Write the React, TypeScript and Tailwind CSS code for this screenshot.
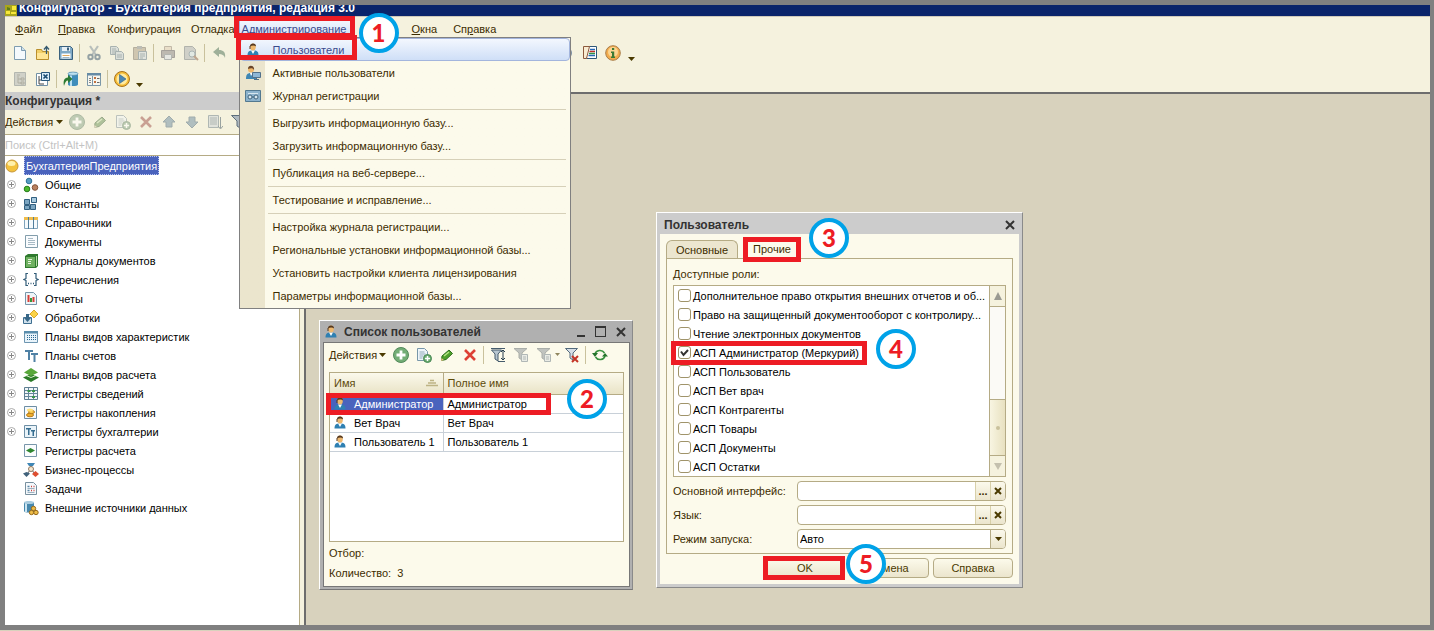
import React, { useState } from "react";

type IconProps = { name: string; dim?: boolean };

// 16x16 toolbar and tree glyphs
const glyphs: Record<string, React.ReactNode> = {
  doc: (
    <>
      <path d="M2.5 1.5h7l4 4v9h-11z" fill="#f4f9fc" stroke="#7d9cb0" />
      <path d="M9.5 1.5v4h4" fill="#cfe0ea" stroke="#7d9cb0" />
    </>
  ),
  open: (
    <>
      <path d="M1.5 4.5h5l1 2h6v8h-12z" fill="#f2cf68" stroke="#b98e2c" />
      <path d="M2 8h11v6H2z" fill="#ffe594" />
      <path d="M11.500 9V2M9 4.500l2.500-3 2.500 3" fill="none" stroke="#35596f" strokeWidth="1.300" />
    </>
  ),
  save: (
    <>
      <path d="M1.5 1.500h11l2 2v11h-13z" fill="#7fa9c6" stroke="#3a617e" />
      <path d="M4 2h8v4H4z" fill="#e6eff5" />
      <path d="M9 2.500h2v3H9z" fill="#3a617e" />
      <path d="M3.500 8.500h9v5h-9z" fill="#fff" />
      <path d="M4.500 10.500h7" stroke="#e0a95c" />
      <path d="M4.500 12.500h7" stroke="#9fb6c5" />
    </>
  ),
  cut: (
    <>
      <path d="M4 1l6 9M12 1l-6 9" stroke="#6f90a8" strokeWidth="2.200" />
      <circle cx="4.500" cy="12" r="2.200" fill="none" stroke="#1d5788" strokeWidth="2" />
      <circle cx="11.500" cy="12" r="2.200" fill="none" stroke="#1d5788" strokeWidth="2" />
    </>
  ),
  copy: (
    <>
      <path d="M1.500 1.500h6l2 2v6h-8z" fill="#b9cfdf" stroke="#4c7897" />
      <path d="M3 4h4M3 6h5M3 8h3" stroke="#4c7897" />
      <path d="M6.500 6.500h6l2 2v6h-8z" fill="#b9cfdf" stroke="#4c7897" />
      <path d="M8 10h5M8 12h5" stroke="#4c7897" />
    </>
  ),
  paste: (
    <>
      <path d="M1.500 2.500h12v12h-12z" fill="#b89a6a" stroke="#7d6d50" />
      <path d="M5 1h5v3H5z" fill="#7f8b92" />
      <path d="M6.500 6.500h8v8h-8z" fill="#c5d8e5" stroke="#4c7897" />
      <path d="M8 9h5M8 11h5M8 13h3" stroke="#4c7897" />
    </>
  ),
  print: (
    <>
      <path d="M4.500 1.500h7v5h-7z" fill="#f0c99a" stroke="#9c7f62" />
      <path d="M1.500 5.500h13v7h-13z" fill="#8c7f86" stroke="#5c5360" />
      <path d="M4.500 9.500h7v5h-7z" fill="#d3dfea" stroke="#6c7c90" />
    </>
  ),
  preview: (
    <>
      <path d="M1.500 1.500h8l3 3v10h-11z" fill="#a9b0b8" stroke="#6a7682" />
      <circle cx="9" cy="9" r="3" fill="#c4e4f4" stroke="#4e7fa3" />
      <path d="M11 11l4 4" stroke="#b0541e" strokeWidth="2" />
    </>
  ),
  undo: <path d="M2 7l6-5v3c4 0 7 2 6 8-1-3-3-4-6-4v3z" fill="#2f7a48" />,
  tree: (
    <>
      <path d="M2.500 1.500h11v13h-11z" fill="#a9b2b5" stroke="#6c7f8b" />
      <path d="M5 4h3M6 5v7M6 8h4M6 12h4M9 7h3v2H9zM9 11h3v2H9z" fill="none" stroke="#6e6e62" />
    </>
  ),
  treex: (
    <>
      <path d="M1.500 2.500h11v12h-11z" fill="#fff" stroke="#7090a5" />
      <path d="M4 5v8h5M4 9h4" fill="none" stroke="#444" />
      <path d="M6.500 1.500h8v8h-8z" fill="#d8ecf8" stroke="#29587b" />
      <path d="M8.500 3.500l4 4M12.500 3.500l-4 4" stroke="#174a70" strokeWidth="1.600" />
    </>
  ),
  db: (
    <>
      <path d="M5 2.500c0-2 10-2 10 0v11c0 2-10 2-10 0z" fill="#3f8dbb" />
      <path d="M8 3v12" stroke="#b8dff2" strokeWidth="2" />
      <ellipse cx="10" cy="2.700" rx="5" ry="1.700" fill="#bde0f0" stroke="#47809f" strokeWidth=".6" />
      <path d="M1 15c-1-5 0-8 4-8.500V4l4.500 4L5 12V9.500c-2 0-3 2-4 5.500z" fill="#2c7a33" />
    </>
  ),
  window: (
    <>
      <path d="M1.500 2.500h13v12h-13z" fill="#f6f6ef" stroke="#7b97a8" />
      <path d="M1 2h14v2.500H1z" fill="#668ba5" />
      <path d="M6.500 5v9" stroke="#7b97a8" />
      <path d="M3 7.500h2M3 9.500h2M3 11.500h2" stroke="#888" />
      <path d="M8 6h2v2H8zM8 10h2v2H8z" fill="#c2703f" />
      <path d="M11 7.500h2.500M11 11.500h2.500" stroke="#666" />
    </>
  ),
  play: (
    <>
      <circle cx="8" cy="8" r="7.500" fill="#f6bd35" stroke="#a9731c" />
      <circle cx="8" cy="8" r="5.500" fill="#ffeaa0" />
      <path d="M5.500 3.500L12 8l-6.500 4.500z" fill="#4c87b3" stroke="#2d6088" strokeWidth=".6" />
    </>
  ),
  search: <circle cx="7" cy="8" r="5.500" fill="#fff" stroke="#7a8ca0" />,
  syntax: (
    <>
      <path d="M4.500 1.500h10v12h-10z" fill="#fff" stroke="#2f5878" />
      <path d="M1.500 1.500h6l-3 12h-3z" fill="#f8ecd2" stroke="#8d5a3c" />
      <path d="M8 4.500h5" stroke="#2868b5" strokeWidth="1.500" />
      <path d="M7.500 6.500H13" stroke="#c03328" strokeWidth="1.500" />
      <path d="M7 8.500h6" stroke="#2f9545" strokeWidth="1.500" />
      <path d="M6.500 10.500H13" stroke="#2868b5" strokeWidth="1.500" />
    </>
  ),
  info: (
    <>
      <circle cx="8" cy="8" r="7.300" fill="#f3ad4e" stroke="#a97d49" />
      <circle cx="8" cy="7" r="5" fill="#fbd592" />
      <path d="M7 3h2.200v2H7zM6 6.500h3.200v5H10V13H6v-1.500h1V8H6z" fill="#3b7a35" />
    </>
  ),
  add: (
    <>
      <circle cx="8" cy="8" r="7.500" fill="#73ad75" stroke="#52895a" />
      <path d="M8 3.500v9M3.500 8h9" stroke="#fff" strokeWidth="2.800" />
    </>
  ),
  pencil: (
    <>
      <path d="M2.500 13.500l.5-4.500 7-6 3.500 3.500-6.500 6z" fill="#4fa02b" stroke="#2c6d1b" />
      <path d="M5 9l5-4" stroke="#b9e786" strokeWidth="1.500" />
      <path d="M2 14l.5-3 2.500 2z" fill="#e6c58c" />
    </>
  ),
  docadd: (
    <>
      <path d="M1.500 1.500h7l3 3v9h-10z" fill="#eef5f9" stroke="#7897a9" />
      <path d="M3.500 5h5M3.500 7h6M3.500 9h4M3.500 11h3" stroke="#91abba" />
      <circle cx="11.500" cy="11.500" r="4" fill="#69ab6d" stroke="#498756" />
      <path d="M11.500 9v5M9 11.500h5" stroke="#fff" strokeWidth="1.500" />
    </>
  ),
  del: <path d="M3 3l10 10M13 3L3 13" stroke="#dd4035" strokeWidth="2.600" />,
  up: <path d="M8 2l6 6h-3v5H5V8H2z" fill="#5590bc" stroke="#386c93" />,
  down: <path d="M8 14l6-6h-3V3H5v5H2z" fill="#5590bc" stroke="#386c93" />,
  list: (
    <>
      <path d="M1.500 1.500h10v12h-10z" fill="#c5d5e0" stroke="#5e809a" />
      <path d="M3 4h7M3 6h7M3 8h7M3 10h7" stroke="#5e809a" />
      <path d="M13.500 3v11M11 12l2.500 3 2.500-3" fill="none" stroke="#2f5875" />
    </>
  ),
  filter: <path d="M1.500 1.500h13L10 7v7l-3-2V7z" fill="#aeb8bf" stroke="#5e6f7c" />,
  filterset: (
    <>
      <path d="M1 1.500h14M8 14.500h7" stroke="#455b6c" />
      <path d="M1.500 3h10L8 7v7l-3-2V7z" fill="#b8c6d1" stroke="#455b6c" />
      <path d="M13 3v10M11 5l2-2 2 2M11 11l2 2 2-2" fill="none" stroke="#263d4c" />
    </>
  ),
  filterdoc: (
    <>
      <path d="M1 1.500h13L9 6v7l-3-2V6z" fill="#7f8f9b" stroke="#54656f" />
      <path d="M8.500 7.500h6v7h-6z" fill="#d3dee6" stroke="#5a7890" />
      <path d="M10 10h3M10 12h3" stroke="#5a7890" />
    </>
  ),
  filteroff: (
    <>
      <path d="M1.500 1.500h12L9 6v7l-3-2V6z" fill="#d6dee5" stroke="#52697b" />
      <path d="M8 9l6 6M14 9l-6 6" stroke="#c43426" strokeWidth="2" />
    </>
  ),
  refresh: (
    <>
      <path d="M3 7c1-4 7-5 9.500-1M13 9c-1 4-7 5-9.500 1" fill="none" stroke="#35903c" strokeWidth="1.600" />
      <path d="M0 6h6L3 10zM10 9.500h6L13 6z" fill="#25752d" />
    </>
  ),
  user: (
    <>
      <path d="M2.500 13.500c0-4 1.500-5 5.500-5s5.500 1 5.500 5z" fill="#2f80b2" />
      <path d="M6 8.500l2 3.500 2-3.500z" fill="#fff" />
      <ellipse cx="8" cy="5" rx="2.800" ry="3.500" fill="#eeb86d" />
      <path d="M5 4.500C4.500.5 11.500.5 11 4.500 9.500 3 7 3 5 4.500z" fill="#553921" />
      <path d="M5 4v3" stroke="#553921" />
    </>
  ),
  users: (
    <>
      <path d="M1 14c0-4 1-6 5-6 3 0 5 2 5 6z" fill="#3e87b4" />
      <path d="M5 8l1 3 2-3z" fill="#fff" />
      <circle cx="6" cy="4.500" r="3" fill="#eeb86d" />
      <path d="M3 4c0-5 7-4 6 1-1-2-3-2-6-1z" fill="#68452a" />
      <path d="M7.500 7.500h8v5h-8z" fill="#8eb7d6" stroke="#52718a" />
      <path d="M11.500 12v2M9 14.500h5" stroke="#52718a" />
    </>
  ),
  journal: (
    <>
      <path d="M.5 2.500h15v11H.5z" fill="#8cb2cc" stroke="#537990" />
      <path d="M3 5h10v1H3z" fill="#d7e6ee" />
      <circle cx="5" cy="9" r="2" fill="#d7e6ee" stroke="#41657d" />
      <circle cx="11" cy="9" r="2" fill="#d7e6ee" stroke="#41657d" />
      <path d="M7 9h2" stroke="#41657d" />
    </>
  ),
  common: (
    <>
      <circle cx="6" cy="4" r="2.800" fill="#579ac1" stroke="#2d7298" />
      <circle cx="4" cy="12" r="2.800" fill="#4cb92c" stroke="#267c1b" />
      <circle cx="12" cy="10.500" r="2.800" fill="#b9805f" stroke="#835337" />
    </>
  ),
  consts: (
    <>
      <path d="M1.500 3.500h5v5h-5zM1.500 9.500h5v4h-5zM7.500 8.500h5v5h-5z" fill="#7ba5c1" stroke="#315f80" />
      <path d="M8.500 1.500h5v5h-5z" fill="#a9cadf" stroke="#315f80" />
    </>
  ),
  catalogs: (
    <>
      <path d="M1.500 2.500h13v11h-13z" fill="#f4f9fc" stroke="#7fa3bb" />
      <path d="M1 2h14v3H1z" fill="#f0bd4c" />
      <path d="M5.500 2v12M10.500 2v12" stroke="#4f7d9c" />
    </>
  ),
  docs: (
    <>
      <path d="M2.500 1.500h12v12h-12z" fill="#fafcfe" stroke="#829dab" />
      <path d="M5 4.500h5M5 6.500h7M5 8.500h7M5 10.500h7" stroke="#a8bac5" />
    </>
  ),
  book: (
    <>
      <path d="M2 3l3-2h10v12l-2 2H2z" fill="#2f7a2e" />
      <path d="M3 4h9v10H3z" fill="#6fb161" />
      <path d="M5 6.500h4M5 8.500h3M5 10.500h3" stroke="#e8f3df" />
      <path d="M13.500 3v10" stroke="#b8dda8" />
    </>
  ),
  enums: (
    <>
      <path d="M5 1.500H3v5l-2 1 2 1v5h2M11 1.500h2v5l2 1-2 1v5h-2" fill="none" stroke="#315b77" strokeWidth="1.200" />
      <path d="M5 11.500h1M7.500 11.500h1M10 11.500h1" stroke="#315b77" strokeWidth="1.500" />
    </>
  ),
  reports: (
    <>
      <path d="M2.500 1.500h8l3 3v9h-11z" fill="#eef5f8" stroke="#7796aa" />
      <path d="M5.500 4v7" stroke="#d83e36" strokeWidth="2" />
      <path d="M8 7v4" stroke="#34973a" strokeWidth="2" />
      <path d="M10.500 6v5" stroke="#d83e36" strokeWidth="2" />
    </>
  ),
  process: (
    <>
      <path d="M.5 7.500h8v6h-8z" fill="#cfe0ec" stroke="#3e6f91" />
      <path d="M3 4h3v4h2l-3.500 4L1 8h2z" fill="#376787" />
      <path d="M4.500 4.500h3" stroke="#376787" strokeDasharray="1 1" />
      <path d="M11 0l4 4-4 4-4-4z" fill="#fbd348" stroke="#d9a92c" />
    </>
  ),
  charplan: (
    <>
      <path d="M1.500 2.500h13v11h-13z" fill="#e9f4fb" stroke="#6d95b0" />
      <path d="M1 2h14v2.500H1z" fill="#5a8ead" />
      <path d="M4 6.500h9M4 8.500h9M4 10.500h9" stroke="#2f6b94" strokeDasharray="1 1" />
    </>
  ),
  accounts: <path d="M2 2h8v2H7v8H5V4H2zM8 5h7v2h-2.500v7h-2V7H8z" fill="#4f81a5" />,
  calcplan: (
    <>
      <path d="M8 7l8 3.500L8 15l-8-4.500z" fill="#2b7a27" />
      <path d="M8 1l7 4.500L8 9 1 5.500z" fill="#58a73a" />
      <path d="M3 8.500l5 2 5-2" fill="none" stroke="#d5efc5" />
    </>
  ),
  inforeg: (
    <>
      <path d="M1.500 1.500h13v12h-13z" fill="#f0f5f8" stroke="#5e7e91" />
      <path d="M2 4.500h12M2 7.500h12M2 10.500h12M5.500 2v11M10.500 2v11" stroke="#64869b" />
      <path d="M4.500 4h3v2h-3zM9 4h3v2H9zM9 10h3v2H9z" fill="#38934a" />
    </>
  ),
  accreg: (
    <>
      <path d="M1.500 1.500h12v12h-12z" fill="#f5f9fc" stroke="#6d8ea4" />
      <ellipse cx="7" cy="10" rx="3.500" ry="1.800" fill="#efae2d" stroke="#b67b19" />
      <ellipse cx="8.500" cy="7" rx="3" ry="1.600" fill="#f8c94f" stroke="#b67b19" />
      <ellipse cx="7" cy="5" rx="3" ry="1.500" fill="#ffe07a" />
    </>
  ),
  bookreg: (
    <>
      <path d="M1.500 1.500h12v12h-12z" fill="#e9f3f9" stroke="#6d8ea4" />
      <path d="M3 4h5v1.500H6.500V11H5V5.500H3zM8 6h4v1.500h-1V12H9.500V7.500H8z" fill="#356d90" />
    </>
  ),
  calcreg: (
    <>
      <path d="M1.500 1.500h12v12h-12z" fill="#fafcfe" stroke="#7896aa" />
      <path d="M7.500 5L12 7.500 7.500 10 3 7.500z" fill="#2f8530" />
    </>
  ),
  business: (
    <>
      <path d="M4 1h8l-2 3H6z" fill="#3f86b5" />
      <path d="M8 4v3M4 12l4-5 4 5" stroke="#555" fill="none" />
      <circle cx="8" cy="7" r="2.500" fill="#f5e7cf" stroke="#8f7962" />
      <path d="M3.500 10L7 11.500 3.500 15 0 11.500z" fill="#41627b" />
      <path d="M12.500 9l3.500 3-3.500 3L9 12z" fill="#de4e30" />
    </>
  ),
  tasks: (
    <>
      <path d="M2.500 1.500h8l3 3v9h-11z" fill="#f5f9fc" stroke="#78909f" />
      <path d="M4.500 5.500h2M4.500 9.500h2" stroke="#5785a5" strokeWidth="1.500" />
      <path d="M8 5.500h1M10.500 5.500h1M8 9.500h1M10.500 9.500h1" stroke="#c6453f" strokeWidth="1.500" />
      <path d="M4.500 7.500h7M4.500 11.500h7" stroke="#9db2c0" />
    </>
  ),
  external: (
    <>
      <path d="M1 3c0-2 10-2 10 0v8c0 2-10 2-10 0z" fill="#4788ad" />
      <path d="M3 3v9" stroke="#cce5f1" strokeWidth="2" />
      <ellipse cx="6" cy="2.500" rx="5" ry="1.500" fill="#aaccdf" />
      <circle cx="10.500" cy="8.500" r="2.200" fill="#edbc47" stroke="#96691b" />
      <circle cx="8.500" cy="12.500" r="2.200" fill="#edbc47" stroke="#96691b" />
      <circle cx="13" cy="12.500" r="2.200" fill="#edbc47" stroke="#96691b" />
    </>
  ),
};

function Icon({ name, dim }: IconProps) {
  return (
    <svg
      viewBox="0 0 16 16"
      className={dim ? "h-4 w-4 shrink-0 opacity-50 saturate-50" : "h-4 w-4 shrink-0"}
      aria-hidden="true"
    >
      {glyphs[name]}
    </svg>
  );
}

function ToolButton({ name, dim }: IconProps) {
  return (
    <button type="button" disabled={dim} aria-label={name} className="flex h-5 w-[23px] shrink-0 items-center justify-center">
      <Icon name={name} dim={dim} />
    </button>
  );
}

function Caret() {
  return (
    <svg viewBox="0 0 7 4" className="h-1 w-[7px] shrink-0" aria-hidden="true">
      <path d="M0 0h7L3.500 4z" fill="#4a3a00" />
    </svg>
  );
}

const Divider = () => <span className="mx-[2px] h-[18px] w-px shrink-0 bg-[#c9c19c]" />;

function Cross() {
  return (
    <svg viewBox="0 0 10 10" className="h-[10px] w-[10px]" aria-hidden="true">
      <path d="M1 1l8 8M9 1L1 9" stroke="#333" strokeWidth="2" />
    </svg>
  );
}

function Step({ n, className }: { n: number; className: string }) {
  return (
    <span
      className={
        "pointer-events-none absolute z-30 flex h-10 w-10 items-center justify-center rounded-full border-4 border-[#00a2e8] bg-white font-[Lato,sans-serif] text-2xl leading-6 font-black text-[#ed1c24] " +
        className
      }
    >
      {n}
    </span>
  );
}

function Frame({ className }: { className: string }) {
  return <span className={"pointer-events-none absolute z-20 border-[5px] border-[#ed1c24] " + className} />;
}

const adminMenu = [
  [
    { text: "Пользователи", icon: "user" },
    { text: "Активные пользователи", icon: "users" },
    { text: "Журнал регистрации", icon: "journal" },
  ],
  [{ text: "Выгрузить информационную базу..." }, { text: "Загрузить информационную базу..." }],
  [{ text: "Публикация на веб-сервере..." }],
  [{ text: "Тестирование и исправление..." }],
  [
    { text: "Настройка журнала регистрации..." },
    { text: "Региональные установки информационной базы..." },
    { text: "Установить настройки клиента лицензирования" },
    { text: "Параметры информационной базы..." },
  ],
] as { text: string; icon?: string }[][];

const tree = [
  { text: "Общие", icon: "common", open: true },
  { text: "Константы", icon: "consts", open: true },
  { text: "Справочники", icon: "catalogs", open: true },
  { text: "Документы", icon: "docs", open: true },
  { text: "Журналы документов", icon: "book", open: true },
  { text: "Перечисления", icon: "enums", open: true },
  { text: "Отчеты", icon: "reports", open: true },
  { text: "Обработки", icon: "process", open: true },
  { text: "Планы видов характеристик", icon: "charplan", open: true },
  { text: "Планы счетов", icon: "accounts", open: true },
  { text: "Планы видов расчета", icon: "calcplan", open: true },
  { text: "Регистры сведений", icon: "inforeg", open: true },
  { text: "Регистры накопления", icon: "accreg", open: true },
  { text: "Регистры бухгалтерии", icon: "bookreg", open: true },
  { text: "Регистры расчета", icon: "calcreg", open: false },
  { text: "Бизнес-процессы", icon: "business", open: false },
  { text: "Задачи", icon: "tasks", open: false },
  { text: "Внешние источники данных", icon: "external", open: false },
];

const users = ["Администратор", "Вет Врач", "Пользователь 1"];

const roles = [
  "Дополнительное право открытия внешних отчетов и об...",
  "Право на защищенный документооборот с контролиру...",
  "Чтение электронных документов",
  "АСП Администратор (Меркурий)",
  "АСП Пользователь",
  "АСП Вет врач",
  "АСП Контрагенты",
  "АСП Товары",
  "АСП Документы",
  "АСП Остатки",
];

function AdminMenu() {
  return (
    <div className="absolute top-[18px] left-0 z-10 w-[332px] border border-[#808080] bg-[#fcfaeb] bg-linear-to-r from-[#ebe5cd] from-[25px] to-[#fcfaeb] to-[25px] pb-px text-[#3c2c00]">
      {adminMenu.map((group, g) => (
        <div key={g}>
          {g > 0 && <div className="mr-1 ml-7 flex h-1 items-center"><span className="h-px w-full bg-[#d6d0b8]" /></div>}
          {group.map((item, i) => (
            <button
              key={item.text}
              type="button"
              className={
                g === 0 && i === 0
                  ? "flex h-[23px] w-full items-center rounded border border-[#a3b5dd] bg-linear-to-b from-[#f3f7fe] to-[#cfdff7] pl-1 text-[#3b4a8c]"
                  : "flex h-[23px] w-full items-center pl-[5px]"
              }
            >
              <span className="w-7 shrink-0">{item.icon && <Icon name={item.icon} />}</span>
              {item.text}
            </button>
          ))}
        </div>
      ))}
      <Frame className="-top-[3px] -left-[4px] h-[25px] w-[121px]" />
    </div>
  );
}

function MenuBar() {
  return (
    <nav className="flex h-6 shrink-0 items-center pl-[10px]">
      <button type="button" className="mr-4"><u>Ф</u>айл</button>
      <button type="button" className="mr-3"><u>П</u>равка</button>
      <button type="button" className="mr-[10px]">Конфигурация</button>
      <button type="button">Отладка</button>
      <div className="relative ml-1 w-[113px]">
        <button type="button" className="flex h-5 w-full items-center border border-[#a3b5dd] bg-linear-to-b from-[#f3f7fe] to-[#cfdff7] pl-[2px] text-[#3b4a8c]">
          Администрирование
        </button>
        <AdminMenu />
        <Frame className="-top-[3px] -left-[5px] h-[22px] w-[121px]" />
        <Step n={1} className="-top-[6px] left-[120px]" />
      </div>
      <button type="button" className="mr-4 ml-[60px]"><u>О</u>кна</button>
      <button type="button">Сп<u>р</u>авка</button>
    </nav>
  );
}

function Toolbars() {
  return (
    <div className="flex h-[51px] shrink-0 flex-col gap-[6px] pt-[2px] pl-[3px]">
      <div className="flex h-5 items-center">
        <ToolButton name="doc" />
        <ToolButton name="open" />
        <ToolButton name="save" />
        <Divider />
        <ToolButton name="cut" dim />
        <ToolButton name="copy" dim />
        <ToolButton name="paste" dim />
        <Divider />
        <ToolButton name="print" dim />
        <ToolButton name="preview" dim />
        <Divider />
        <ToolButton name="undo" dim />
        <div className="ml-[325px] flex items-center">
          <ToolButton name="search" />
          <ToolButton name="syntax" />
          <ToolButton name="info" />
          <span className="mt-3 ml-1 flex"><Caret /></span>
        </div>
      </div>
      <div className="flex h-5 items-center">
        <ToolButton name="tree" dim />
        <ToolButton name="treex" />
        <Divider />
        <ToolButton name="db" />
        <ToolButton name="window" />
        <Divider />
        <ToolButton name="play" />
        <span className="mt-3 ml-[3px] flex"><Caret /></span>
      </div>
    </div>
  );
}

function ConfigTree() {
  return (
    <aside className="flex w-[301px] shrink-0 flex-col border-r-2 border-[#6d6d6d] bg-[#f5f2de]">
      <h2 className="flex h-[18px] items-center bg-[#ccc] text-xs font-bold text-[#333]">Конфигурация *</h2>
      <div className="flex h-6 items-center overflow-hidden">
        <button type="button" className="mr-[2px] flex w-[58px] shrink-0 items-center justify-between">Действия <Caret /></button>
        <ToolButton name="add" dim />
        <ToolButton name="pencil" dim />
        <ToolButton name="docadd" dim />
        <ToolButton name="del" dim />
        <ToolButton name="up" dim />
        <ToolButton name="down" dim />
        <ToolButton name="list" dim />
        <ToolButton name="filter" />
      </div>
      <input
        type="text"
        aria-label="Поиск"
        placeholder="Поиск (Ctrl+Alt+M)"
        className="mr-1 h-[22px] border-y border-[#b5ab85] bg-white outline-none placeholder:text-[#c3c3c3]"
      />
      <ul className="mr-1 flex-1 border-r border-[#b5ab85] bg-white text-black">
        <li className="flex h-[19px] items-center">
          <svg viewBox="0 0 14 14" className="h-[14px] w-[14px]" aria-hidden="true">
            <circle cx="7" cy="7" r="6" fill="#f3c13c" stroke="#c8973a" />
            <ellipse cx="6.500" cy="4.500" rx="4" ry="2.500" fill="#fff0ac" />
          </svg>
          <span className="ml-[5px] flex h-[19px] items-center border border-dotted border-[#b8c4f0] bg-[#4a63bd] px-px text-white">БухгалтерияПредприятия</span>
        </li>
        {tree.map((node) => (
          <li key={node.text} className="flex h-[19px] items-center pl-[2px]">
            <span className="w-4">
              {node.open && (
                <svg viewBox="0 0 9 9" className="h-[9px] w-[9px]" aria-hidden="true">
                  <circle cx="4.500" cy="4.500" r="4" fill="#fff" stroke="#aaa" />
                  <path d="M2 4.500h5M4.500 2v5" stroke="#888" />
                </svg>
              )}
            </span>
            <Icon name={node.icon} />
            <span className="ml-[6px]">{node.text}</span>
          </li>
        ))}
      </ul>
    </aside>
  );
}

function UsersWindow() {
  const [current, setCurrent] = useState(0);

  return (
    <section className="absolute top-[226px] left-[13px] flex h-[270px] w-[314px] flex-col border border-t-white border-r-[#8a8a8a] border-b-[#777] border-l-white bg-[#b0b0b0] pr-[2px] pb-[2px] pl-[3px]">
      <header className="flex h-[21px] shrink-0 items-center pr-1 text-[#333]">
        <Icon name="user" />
        <h2 className="ml-[5px] flex-1 text-xs font-bold">Список пользователей</h2>
        <button type="button" aria-label="Свернуть" className="mt-2 mr-[10px] h-[2px] w-2 bg-[#333]" />
        <button type="button" aria-label="Развернуть" className="mr-[10px] h-[11px] w-[11px] border border-t-2 border-[#333]" />
        <button type="button" aria-label="Закрыть"><Cross /></button>
      </header>
      <div className="flex flex-1 flex-col border border-[#777] bg-[#fcfaeb] px-[5px]">
        <div className="flex h-[23px] items-center bg-[#fcfaeb]">
          <button type="button" className="flex w-[57px] items-center justify-between">Действия <Caret /></button>
          <span className="ml-[3px] flex items-center">
            <ToolButton name="add" />
            <ToolButton name="docadd" />
            <ToolButton name="pencil" />
            <ToolButton name="del" />
            <Divider />
            <ToolButton name="filterset" />
            <ToolButton name="filterdoc" dim />
            <ToolButton name="filterdoc" dim />
            <svg viewBox="0 0 5 3" className="h-[3px] w-[5px] opacity-60" aria-hidden="true"><path d="M0 0h5L2.500 3z" fill="#4a3a00" /></svg>
            <ToolButton name="filteroff" />
            <Divider />
            <ToolButton name="refresh" />
          </span>
        </div>
        <div className="mt-[6px] h-[170px] border border-[#b5ab85] bg-white">
          <table className="w-full table-fixed border-collapse text-left text-black">
            <thead>
              <tr className="h-[21px] bg-linear-to-b from-[#fbf9ec] to-[#e9e3c6] text-[#5d4a0a]">
                <th className="w-[113px] border-r border-b border-[#b5ab85] px-1 font-normal">
                  <span className="flex items-center justify-between">
                    Имя
                    <svg viewBox="0 0 12 8" className="mr-px h-2 w-3" aria-hidden="true">
                      <path d="M4 1.500h4M2 4h8M0 6.500h12" stroke="#bdb384" strokeWidth="1.500" />
                    </svg>
                  </span>
                </th>
                <th className="border-b border-[#b5ab85] px-1 font-normal">Полное имя</th>
              </tr>
            </thead>
            <tbody>
              {users.map((name, i) => (
                <tr key={name} onClick={() => setCurrent(i)} className="h-[19px]">
                  <td className={i === current ? "border-r border-b border-[#c8d0d8] bg-[#4a63bd] px-[2px] text-white" : "border-r border-b border-[#c8d0d8] px-[2px]"}>
                    <span className="flex items-center gap-[6px] whitespace-nowrap"><Icon name="user" />{name}</span>
                  </td>
                  <td className="border-b border-[#c8d0d8] px-1">{name}</td>
                </tr>
              ))}
            </tbody>
          </table>
        </div>
        <p className="mt-px leading-5">Отбор:</p>
        <p className="leading-5">Количество:&nbsp; 3</p>
      </div>
      <Frame className="top-[72px] left-[6px] h-[22px] w-[225px]" />
      <Step n={2} className="top-[58px] left-[247px]" />
    </section>
  );
}

function PickField({ id, label }: { id: string; label: string }) {
  return (
    <div className="flex h-6 items-center">
      <label htmlFor={id} className="w-[124px]">{label}</label>
      <div className="flex h-5 flex-1 overflow-hidden rounded border border-[#b5ab85] bg-white">
        <input id={id} type="text" className="min-w-0 flex-1 px-[2px] text-black outline-none" />
        <button type="button" aria-label="Выбрать" className="w-[15px] border-l border-[#d8d0a9] bg-linear-to-b from-[#fbf9ec] to-[#ebe5cd] font-bold">...</button>
        <button type="button" aria-label="Очистить" className="flex w-[15px] items-center justify-center border-l border-[#d8d0a9] bg-linear-to-b from-[#fbf9ec] to-[#ebe5cd]">
          <svg viewBox="0 0 8 8" className="h-2 w-2" aria-hidden="true"><path d="M1 1l6 6M7 1L1 7" stroke="#4a3a00" strokeWidth="2" /></svg>
        </button>
      </div>
    </div>
  );
}

function UserDialog() {
  return (
    <section className="absolute top-[118px] left-[350px] flex h-[376px] w-[367px] flex-col border border-t-white border-r-[#8a8a8a] border-b-[#8a8a8a] border-l-white bg-[#ccc] px-[3px] pb-[3px]">
      <header className="flex h-[21px] shrink-0 items-center justify-between pt-[2px] pr-1 pl-1 text-[#333]">
        <h2 className="text-xs font-bold">Пользователь</h2>
        <button type="button" aria-label="Закрыть"><Cross /></button>
      </header>
      <div className="flex flex-1 flex-col bg-[#fcfaeb] px-[6px] pt-[6px]">
        <div className="flex h-[18px]">
          <button type="button" className="w-[72px] rounded-t-md border border-b-0 border-[#b5ab85] bg-[#ece6cf]">Основные</button>
          <button type="button" className="ml-[6px] w-14 bg-[#fcfaeb]">Прочие</button>
        </div>
        <div className="border border-[#b5ab85] px-[6px] pb-[2px]">
          <p className="h-[26px] pt-2 leading-[15px]">Доступные роли:</p>
          <div className="flex h-[192px] border border-[#b5ab85] bg-white">
            <ul className="flex-1 text-black">
              {roles.map((role, i) => (
                <li key={role} className="h-[19px]">
                  <label className="flex h-[19px] items-center pl-1 whitespace-nowrap">
                    <span className="relative flex h-[13px] w-[13px]">
                      <input type="checkbox" defaultChecked={i === 3} className="peer h-[13px] w-[13px] appearance-none rounded-[3px] border border-[#a0946a] bg-white" />
                      <svg viewBox="0 0 13 13" className="pointer-events-none absolute inset-0 hidden peer-checked:block" aria-hidden="true">
                        <path d="M3 5.500l2.500 3.500L10 4" fill="none" stroke="#333" strokeWidth="2" />
                      </svg>
                    </span>
                    <span className="ml-[2px]">{role}</span>
                  </label>
                </li>
              ))}
            </ul>
            <div className="flex w-4 flex-col border-l border-[#b5ab85] bg-[#fbfaf6]">
              <button type="button" aria-label="Вверх" className="flex h-[21px] items-center justify-center border-b border-[#b5ab85] bg-[#f5f2de]">
                <svg viewBox="0 0 8 8" className="h-2 w-2" aria-hidden="true"><path d="M4 0l4 8H0z" fill="#9a9a92" /></svg>
              </button>
              <div className="flex-1" />
              <div className="flex h-[57px] items-center justify-center border-y border-[#b5ab85] bg-linear-to-r from-[#f8f5e2] to-[#e8e1c0]">
                <span className="h-1 w-1 rounded-full bg-[#c9c19c]" />
              </div>
              <button type="button" aria-label="Вниз" className="flex h-5 items-center justify-center bg-[#f5f2de]">
                <svg viewBox="0 0 8 7" className="h-[7px] w-2" aria-hidden="true"><path d="M4 7l4-7H0z" fill="#c4c0ae" /></svg>
              </button>
            </div>
          </div>
          <div className="pt-[2px]">
            <PickField id="iface" label="Основной интерфейс:" />
            <PickField id="lang" label="Язык:" />
            <div className="flex h-6 items-center">
              <label htmlFor="mode" className="w-[124px]">Режим запуска:</label>
              <div className="relative flex h-5 flex-1 overflow-hidden rounded border border-[#b5ab85] bg-white">
                <select id="mode" className="w-full appearance-none px-[2px] text-black outline-none">
                  <option>Авто</option>
                </select>
                <span className="pointer-events-none absolute inset-y-0 right-0 flex w-[15px] items-center justify-center border-l border-[#b5ab85] bg-linear-to-b from-[#fbf9ec] to-[#ebe5cd]">
                  <Caret />
                </span>
              </div>
            </div>
          </div>
        </div>
        <div className="mt-1 flex justify-end gap-1 text-[#4a3a00]">
          <button type="button" className="h-5 w-20 rounded border border-[#b5ab85] bg-linear-to-b from-[#fcfaeb] to-[#ebe5cd]">OK</button>
          <button type="button" className="h-5 w-20 rounded border border-[#b5ab85] bg-linear-to-b from-[#fcfaeb] to-[#ebe5cd]">Отмена</button>
          <button type="button" className="h-5 w-20 rounded border border-[#b5ab85] bg-linear-to-b from-[#fcfaeb] to-[#ebe5cd]">Справка</button>
        </div>
      </div>
      <Frame className="top-[24px] left-[86px] h-[25px] w-[58px]" />
      <Step n={3} className="top-[5px] left-[152px]" />
      <Frame className="top-[128px] left-[14px] h-[24px] w-[196px]" />
      <Step n={4} className="top-[116px] left-[219px]" />
      <Frame className="top-[343px] left-[106px] h-[24px] w-[82px]" />
      <Step n={5} className="top-[331px] left-[189px]" />
    </section>
  );
}

export default function App() {
  return (
    <div className="flex min-h-screen flex-col overflow-hidden bg-[#d8d2bd] pb-px font-['Liberation_Sans',Arial,sans-serif] text-[11px] leading-[14px] text-[#3c2c00]">
      <div className="flex flex-1 flex-col border-t-[5px] border-r-4 border-b-[5px] border-l-[5px] border-[#808080] bg-[#f5f2de]">
        <header className="flex h-3 shrink-0 items-center overflow-hidden border-b border-[#cfcabb] bg-[#0a246a] pb-[6px] text-white">
          <svg viewBox="0 0 12 12" className="mt-1 h-3 w-3 shrink-0" aria-hidden="true">
            <path d="M0 0h12v12H0z" fill="#a8a51c" />
            <path d="M1 7h4v3H1zM7 2h4v4H7zM6 8h5v2H6z" fill="#f7e83b" />
            <path d="M2 3l3 1v2H2z" fill="#5d7c1a" />
          </svg>
          <h1 className="ml-[2px] text-xs font-bold whitespace-nowrap">Конфигуратор - Бухгалтерия предприятия, редакция 3.0</h1>
        </header>
        <MenuBar />
        <Toolbars />
        <div className="flex flex-1">
          <ConfigTree />
          <main className="relative flex-1 border-t-2 border-[#6d6d6d] bg-[#d8d2bd]">
            <UsersWindow />
            <UserDialog />
          </main>
        </div>
      </div>
    </div>
  );
}
